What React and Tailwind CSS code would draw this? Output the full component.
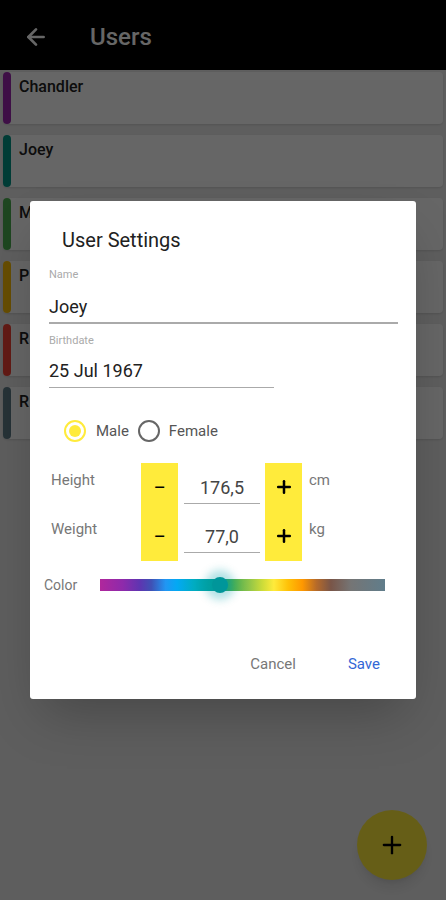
import React from 'react';
import { ArrowLeft, Plus } from 'lucide-react';

const USERS = [
  { name: 'Chandler', color: 'bg-[#9c27b0]' },
  { name: 'Joey', color: 'bg-[#009688]' },
  { name: 'Monica', color: 'bg-[#4caf50]' },
  { name: 'Phoebe', color: 'bg-[#ffc107]' },
  { name: 'Rachel', color: 'bg-[#f44336]' },
  { name: 'Ross', color: 'bg-[#607d8b]' }
];

const GRADIENT =
  'linear-gradient(to right, #b0279c 0%, #8e2aab 8%, #5e35b1 14%, #3f51b5 18%, #2196f3 23%, #03a9f4 27%, #00acc1 33%, #009688 42%, #4caf50 47%, #8bc34a 52%, #cddc39 57%, #ffeb3b 61%, #ffc107 66%, #ff9800 71%, #b56a2a 76%, #795548 81%, #757575 88%, #607d8b 100%)';

function Stepper({ label, value, unit }) {
  return (
    <div className="flex items-start">
      <span className="w-[91px] pl-[1px] pt-[6px] text-[15px] text-[#777]">{label}</span>
      <div className="w-[37px] h-[49px] bg-[#ffeb3b] flex items-center justify-center text-[22px] text-black">
        −
      </div>
      <div className="ml-[6px] w-[76px] h-[49px] flex flex-col items-center pt-[14px]">
        <span className="text-[18px] leading-[22px] text-[#444]">{value}</span>
        <div className="mt-[4px] w-full h-[1.5px] bg-[#aaa]" />
      </div>
      <div className="ml-[5px] w-[37px] h-[49px] bg-[#ffeb3b] flex items-center justify-center text-black">
        <Plus size={20} strokeWidth={3} />
      </div>
      <span className="ml-[7px] pt-[6px] text-[15px] text-[#777]">{unit}</span>
    </div>
  );
}

export default function App() {
  return (
    <div
      className="relative w-[446px] h-[900px] overflow-hidden bg-[#ececec]"
      style={{ fontFamily: 'Roboto, "Noto Sans", sans-serif' }}
    >
      {/* App bar */}
      <header className="h-[70px] bg-black flex items-center pt-[4px]">
        <ArrowLeft size={26} strokeWidth={2.5} className="ml-[23px] text-white" />
        <h1 className="ml-[41px] text-[24px] font-medium text-white">Users</h1>
      </header>

      {/* User list (mostly hidden behind the dialog) */}
      <div className="flex flex-col gap-[11px] px-[3px] pt-[2px]">
        {USERS.map((u, i) => (
          <div key={u.name} className="h-[52px] bg-white rounded-[4px] shadow-sm flex">
            <div className={`w-[8px] rounded-[4px] ${u.color}`} />
            <span className="ml-[8px] pt-[3px] text-[16px] font-medium text-[#222]">
              {i < 2 ? u.name : u.name.charAt(0)}
            </span>
          </div>
        ))}
      </div>

      {/* FAB */}
      <div className="absolute left-[357px] top-[810px] w-[70px] h-[70px] rounded-full bg-[#ffeb3b] shadow-lg flex items-center justify-center text-black">
        <Plus size={28} strokeWidth={2} />
      </div>

      {/* Scrim */}
      <div className="absolute inset-0 bg-black/60" />

      {/* Dialog */}
      <div className="absolute left-[30px] top-[201px] w-[386px] h-[498px] bg-white rounded-[3px] shadow-2xl flex flex-col">
        <h2 className="pl-[32px] pt-[27px] text-[20px] leading-[24px] text-[#212121]">User Settings</h2>

        <div className="px-[19px] pt-[16px]">
          <label className="block text-[11px] leading-[13px] text-[#aaa]">Name</label>
          <div className="mt-[15px] w-[349px] text-[18px] leading-[22px] text-[#212121]">Joey</div>
          <div className="mt-[4px] w-[349px] h-[1.5px] bg-[#aaa]" />

          <label className="block mt-[10px] text-[11px] leading-[13px] text-[#aaa]">Birthdate</label>
          <div className="mt-[13px] text-[18px] leading-[22px] text-[#212121]">25 Jul 1967</div>
          <div className="mt-[5px] w-[225px] h-[1.5px] bg-[#aaa]" />
        </div>

        {/* Gender */}
        <div className="flex items-center pl-[34px] mt-[32px]">
          <div className="w-[22px] h-[22px] rounded-full border-[2px] border-[#ffeb3b] flex items-center justify-center">
            <div className="w-[12px] h-[12px] rounded-full bg-[#ffeb3b]" />
          </div>
          <span className="ml-[10px] text-[15px] text-[#555]">Male</span>
          <div className="ml-[9px] w-[22px] h-[22px] rounded-full border-[2px] border-[#666]" />
          <span className="ml-[9px] text-[15px] text-[#555]">Female</span>
        </div>

        {/* Steppers */}
        <div className="flex flex-col pl-[20px] mt-[20px]">
          <Stepper label="Height" value="176,5" unit="cm" />
          <Stepper label="Weight" value="77,0" unit="kg" />
        </div>

        {/* Color slider */}
        <div className="flex items-center pl-[14px] mt-[14px]">
          <span className="w-[56px] text-[14px] text-[#777]">Color</span>
          <div className="relative w-[285px] h-[12px]" style={{ background: GRADIENT }}>
            <div className="absolute left-[112px] top-[-2px] w-[16px] h-[16px] rounded-full bg-[#00969a] shadow-[0_0_8px_7px_rgba(0,160,170,0.3)]" />
          </div>
        </div>

        {/* Actions */}
        <div className="mt-auto mb-[24px] flex justify-end items-center pr-[36px]">
          <button className="text-[15px] text-[#777]">Cancel</button>
          <button className="ml-[52px] text-[15px] text-[#3367d6]">Save</button>
        </div>
      </div>
    </div>
  );
}
